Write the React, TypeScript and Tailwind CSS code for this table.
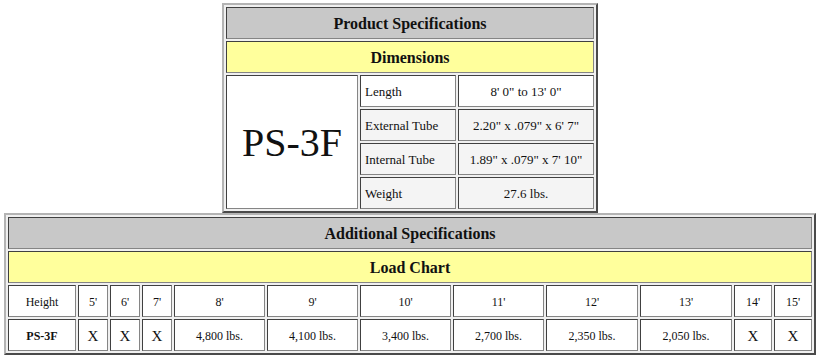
import React from 'react';

// inset cell edge, outset table edge (classic border="1" look)
const cell =
  'flex items-center border border-t-[#404040] border-l-[#404040] border-r-[#858585] border-b-[#858585] pt-[2px] text-[#111]';
const frame =
  'mx-auto border-2 border-t-[#b4b4b4] border-l-[#b4b4b4] border-r-[#4a4a4a] border-b-[#4a4a4a] bg-[#f0f0f0] p-[2px]';

const dims = [
  { label: 'Length', value: `8' 0" to 13' 0"`, shade: false },
  { label: 'External Tube', value: `2.20" x .079" x 6' 7"`, shade: true },
  { label: 'Internal Tube', value: `1.89" x .079" x 7' 10"`, shade: true },
  { label: 'Weight', value: '27.6 lbs.', shade: true },
];

const heights = ["5'", "6'", "7'", "8'", "9'", "10'", "11'", "12'", "13'", "14'", "15'"];
const loads = ['X', 'X', 'X', '4,800 lbs.', '4,100 lbs.', '3,400 lbs.', '2,700 lbs.', '2,350 lbs.', '2,050 lbs.', 'X', 'X'];

const Header: React.FC<{ children: React.ReactNode; yellow?: boolean; span: string }> = ({ children, yellow, span }) => (
  <div className={`${cell} ${span} justify-center text-base font-bold ${yellow ? 'bg-[#ffff9c]' : 'bg-[#c8c8c8]'}`}>
    {children}
  </div>
);

export default function App() {
  return (
    <div className="min-h-[360px] bg-white pt-[3px] font-['Liberation_Serif','DejaVu_Serif',serif]">
      {/* Product Specifications */}
      <div className={`${frame} w-[376px]`}>
        <div className="grid grid-cols-[132px_96px_136px] auto-rows-[32px] gap-[2px]">
          <Header span="col-span-3">Product Specifications</Header>
          <Header span="col-span-3" yellow>
            Dimensions
          </Header>
          <div className={`${cell} row-span-4 justify-center bg-white text-[40px] leading-none`}>PS-3F</div>
          {dims.map((d) => (
            <React.Fragment key={d.label}>
              <div className={`${cell} px-1 text-[13px] ${d.shade ? 'bg-[#f4f4f4]' : 'bg-white'}`}>{d.label}</div>
              <div className={`${cell} justify-center text-[13px] ${d.shade ? 'bg-[#f4f4f4]' : 'bg-white'}`}>{d.value}</div>
            </React.Fragment>
          ))}
        </div>
      </div>

      {/* Additional Specifications / Load Chart */}
      <div className={`${frame} w-[812px]`}>
        <div className="grid grid-cols-[68px_30px_30px_30px_91px_91px_91px_91px_92px_92px_38px_38px] auto-rows-[32px] gap-[2px]">
          <Header span="col-span-12">Additional Specifications</Header>
          <Header span="col-span-12" yellow>
            Load Chart
          </Header>
          <div className={`${cell} justify-center bg-white text-[12px]`}>Height</div>
          {heights.map((h) => (
            <div key={h} className={`${cell} justify-center bg-white text-[12px]`}>
              {h}
            </div>
          ))}
          <div className={`${cell} justify-center bg-white text-[12px] font-bold`}>PS-3F</div>
          {loads.map((l, i) => (
            <div key={i} className={`${cell} justify-center bg-white ${l === 'X' ? 'text-[15px]' : 'text-[12px]'}`}>
              {l}
            </div>
          ))}
        </div>
      </div>
    </div>
  );
}
